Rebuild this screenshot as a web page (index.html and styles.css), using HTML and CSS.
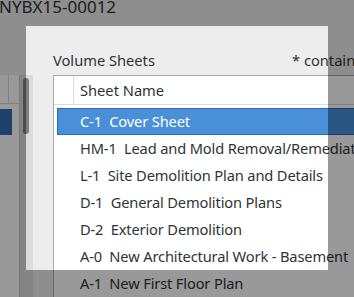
FILE: index.html
```html
<html>
	<head>
		<title>Volume Sheets</title>
		<link rel="stylesheet" href="styles.css">
	</head>
	<body>
		<div class="screen">
			<div class="title">NYBX15-00012</div>
			<div class="labels">
				<span class="lbl-main">Volume Sheets</span>
				<span class="lbl-note">* contains changes</span>
			</div>
			<div class="main">
				<div class="side">
					<div class="side-head"><span class="side-col"></span></div>
					<div class="side-rows">
						<div class="side-sel"></div>
					</div>
				</div>
				<div class="trough"><div class="thumb"></div></div>
				<div class="gap"></div>
				<div class="list">
					<div class="list-head">
						<span class="col-a"></span>
						<span class="col-b">Sheet Name</span>
					</div>
					<div class="rows">
						<div class="row sel">C-1  Cover Sheet</div>
						<div class="row">HM-1  Lead and Mold Removal/Remediation</div>
						<div class="row">L-1  Site Demolition Plan and Details</div>
						<div class="row">D-1  General Demolition Plans</div>
						<div class="row">D-2  Exterior Demolition</div>
						<div class="row">A-0  New Architectural Work - Basement</div>
						<div class="row">A-1  New First Floor Plan</div>
						<div class="row">A-2  New Second Floor Plan</div>
					</div>
				</div>
			</div>
		</div>
		<!-- darkens everything but the highlighted box -->
		<div class="spot"></div>
	</body>
</html>
```
FILE: styles.css
```css
html, body {margin:0;padding:0;}
body {
	width:354px;
	height:297px;
	overflow:hidden;
	background:#ededed;
	font-family:"Noto Sans", "DejaVu Sans", sans-serif;
	font-size:14.67px;
	color:#2e3436;
	position:relative;
}
.screen {
	width:354px;
	height:297px;
	display:flex;
	flex-direction:column;
}
.title {
	height:47px;
	flex:none;
	font-size:17px;
	line-height:17px;
	margin-top:-2px;
	margin-left:-1px;
	color:#333;
	white-space:nowrap;
}
.labels {
	height:30px;
	flex:none;
	display:flex;
	align-items:center;
	padding-left:53px;
	white-space:nowrap;
}
.lbl-main {
	width:239px;
	flex:none;
}
.lbl-note {
	flex:none;
}
.main {
	flex:1;
	display:flex;
	min-height:0;
}
.side {
	width:20px;
	flex:none;
	background:#fff;
	border-right:1px solid #c8c8c8;
	box-sizing:border-box;
}
.side-head {
	height:29px;
	border-bottom:1px solid #d6d6d6;
	box-sizing:border-box;
}
.side-col {
	display:block;
	width:8px;
	height:100%;
	border-right:1px solid #d6d6d6;
}
.side-rows {
	padding-top:5px;
}
.side-sel {
	width:12px;
	height:26px;
	background:#2f6fb4;
}
.trough {
	width:13px;
	flex:none;
	background:#dcdcdc;
	padding:3px 0 0 3px;
	box-sizing:border-box;
}
.thumb {
	width:6px;
	height:56px;
	border-radius:3px;
	background:#7d7d7d;
}
.gap {
	width:20px;
	flex:none;
}
.list {
	flex:1;
	background:#fff;
	border-left:1px solid #a9a9a9;
	border-top:1px solid #a9a9a9;
	white-space:nowrap;
	overflow:hidden;
}
.list-head {
	height:29px;
	display:flex;
	align-items:center;
	border-bottom:1px solid #dcdcdc;
	box-sizing:border-box;
}
.col-a {
	width:19px;
	height:100%;
	border-right:1px solid #dcdcdc;
	flex:none;
}
.col-b {
	padding-left:6px;
}
.rows {
	padding:3px 0 0 3px;
}
.row {
	height:27px;
	line-height:27px;
	padding-left:23px;
	white-space:pre;
	letter-spacing:-0.15px;
}
.row.sel {
	background:#4a90d9;
	color:#fff;
	border:1px solid #2b6cb5;
	border-right:none;
	height:25px;
	line-height:25px;
	padding-left:22px;
}
.spot {
	position:absolute;
	left:26px;
	top:26px;
	width:302px;
	height:244px;
	box-shadow:0 0 0 400px rgba(0,0,0,0.4);
}
```
